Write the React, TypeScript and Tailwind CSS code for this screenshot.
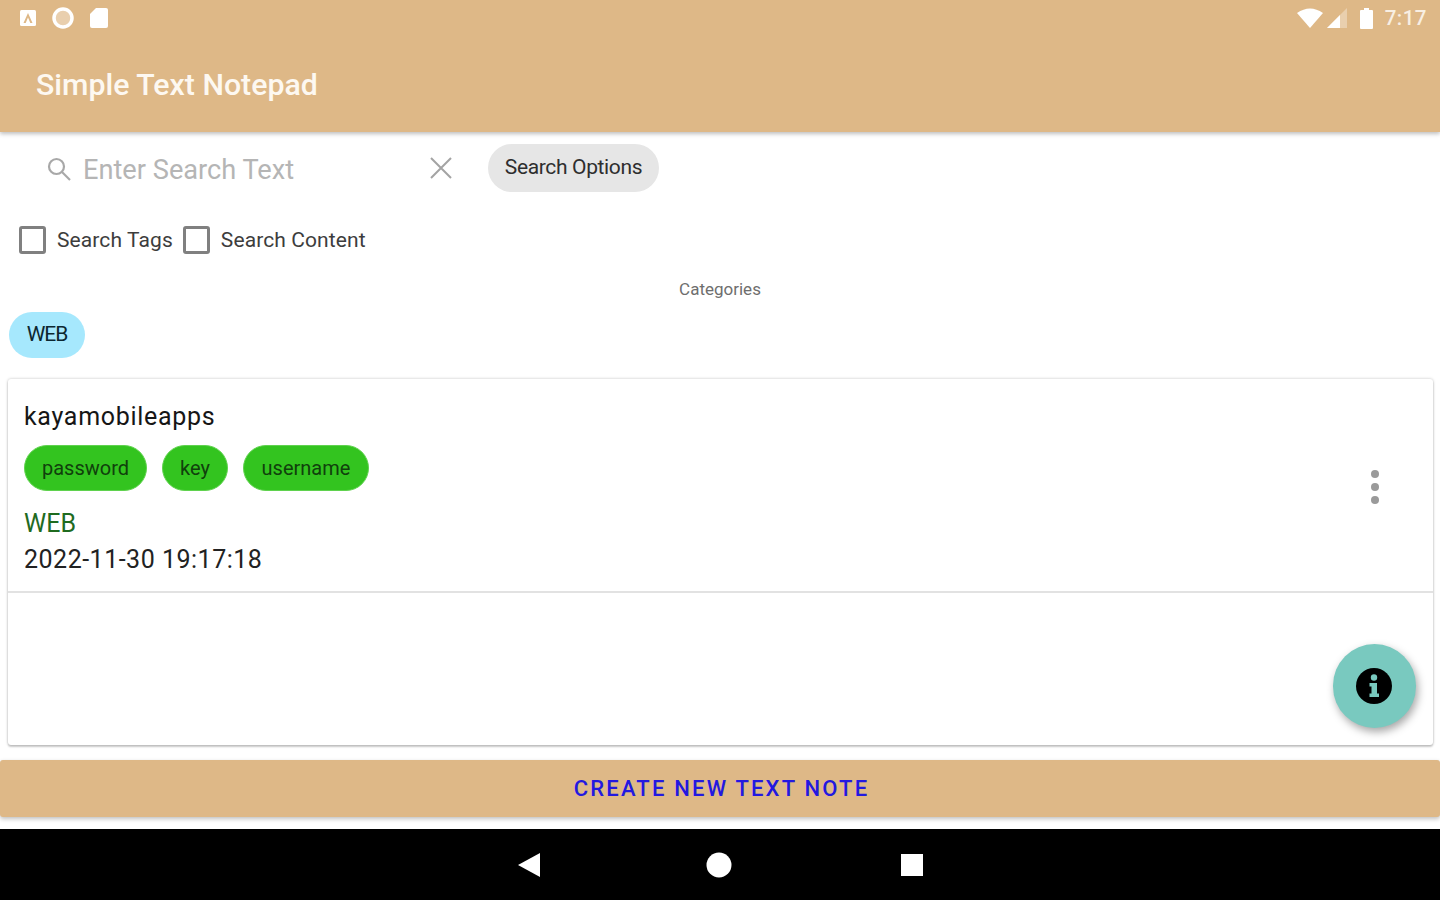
const font = { fontFamily: "Roboto, sans-serif" };

function StatusBar() {
  return (
    <div className="h-[36px] flex items-center justify-between pl-[19px] pr-[13px]">
      <div className="flex items-center gap-[14px]">
        <svg width="18" height="20" viewBox="0 0 18 20">
          <rect x="1" y="2" width="16" height="16" rx="1.5" fill="#fff" />
          <path d="M4.5 15 L9 5 L13.5 15 L11.3 15 L9 9.6 L6.7 15 Z" fill="#DEB887" />
        </svg>
        <svg width="24" height="24" viewBox="0 0 24 24">
          <circle cx="12" cy="12" r="9" fill="#e9cfae" stroke="#fff" strokeWidth="3.5" />
        </svg>
        <svg width="20" height="22" viewBox="0 0 20 22">
          <path d="M7 1 H17 Q19 1 19 3 V19 Q19 21 17 21 H3 Q1 21 1 19 V7 Z" fill="#fff" />
        </svg>
      </div>
      <div className="flex items-center">
        <svg width="28" height="22" viewBox="0 0 28 22" className="mr-[3px]">
          <path d="M1 6 Q14 -3 27 6 L14 21 Z" fill="#fff" />
        </svg>
        <svg width="20" height="20" viewBox="0 0 20 20" className="mr-[12px]">
          <path d="M20 0 V20 H0 Z" fill="#e9cfae" />
          <path d="M13 7 V20 H0 Z" fill="#fff" />
        </svg>
        <svg width="16" height="24" viewBox="0 0 16 24" className="mr-[10px]">
          <path d="M5 2 H10 V4 H13 Q14 4 14 5 V22 Q14 23 13 23 H2 Q1 23 1 22 V5 Q1 4 2 4 H5 Z" fill="#fff" />
        </svg>
        <span className="text-[20.5px] leading-none font-medium text-[#f8efe3] tracking-[0.5px]">7:17</span>
      </div>
    </div>
  );
}

function Chip({ label, w }: { label: string; w: string }) {
  return (
    <div className={`${w} h-[46px] rounded-full bg-[#33c41f] border border-[#5fd24e] flex items-center justify-center text-[20px] text-[#10400c]`}>
      {label}
    </div>
  );
}

function Check({ label }: { label: string }) {
  return (
    <div className="flex items-center gap-[11px]">
      <div className="w-[27px] h-[28px] rounded-[3px] border-[3px] border-[#808080] bg-white" />
      <span className="text-[21px] leading-none tracking-[0.1px] text-[#3d3d3d]">{label}</span>
    </div>
  );
}

export default function App() {
  return (
    <div style={font} className="w-[1440px] h-[900px] overflow-hidden flex flex-col bg-white">
      <header className="h-[132px] shrink-0 bg-[#DEB887] shadow-[0_2px_4px_rgba(0,0,0,0.25)] z-10">
        <StatusBar />
        <div className="pl-[36px] pt-[31px] text-[30.3px] leading-[36px] font-medium text-[#fdf8f1]">Simple Text Notepad</div>
      </header>

      <div className="h-[60px] shrink-0 flex items-end">
        <div className="w-[488px] h-[47px] shrink-0 pl-[45px] flex items-center">
          <svg width="28" height="28" viewBox="0 0 28 28" fill="none" stroke="#a8a8a8" strokeWidth="2.2">
            <circle cx="11.5" cy="11.5" r="7.5" />
            <path d="M17 17 L25 25" />
          </svg>
          <span className="ml-[10px] pt-[5px] text-[27.2px] leading-none text-[#b5b5b5]">Enter Search Text</span>
          <svg width="24" height="24" viewBox="0 0 24 24" fill="none" stroke="#a3a3a3" strokeWidth="2" className="ml-[auto] mr-[35px] mb-[1px]">
            <path d="M2 2 L22 22 M22 2 L2 22" />
          </svg>
        </div>
        <div className="w-[171px] h-[48px] rounded-full bg-[#e6e6e6] flex items-center justify-center text-[21px] tracking-[-0.35px] text-[#2e2e2e]">
          Search Options
        </div>
      </div>

      <div className="h-[48px] mt-[24px] shrink-0 flex items-center pl-[19px] gap-[10px]">
        <Check label="Search Tags" />
        <Check label="Search Content" />
      </div>

      <div className="h-[20px] mt-[15px] mb-[-1px] shrink-0 flex items-center justify-center text-[17px] leading-none text-[#6e6e6e]">Categories</div>

      <div className="mt-[14px] pl-[9px] shrink-0">
        <div className="w-[76px] h-[46px] rounded-full bg-[#a6e8fd] flex items-center justify-center text-[21px] tracking-[-1px] text-[#0c2730]">WEB</div>
      </div>

      <div className="ml-[8px] mr-[7px] mt-[21px] h-[366px] shrink-0 rounded-[3px] bg-white shadow-[0_0_3px_rgba(0,0,0,0.25),0_2px_2px_rgba(0,0,0,0.18)] relative">
        <div className="h-[214px] pt-[8px] pl-[16px] pr-[54px] border-b-2 border-[#e2e2e2] flex items-center justify-between">
          <div className="flex flex-col">
            <div className="text-[25px] leading-[30px] text-[#161616] tracking-[0.7px] mt-[-1px]">kayamobileapps</div>
            <div className="flex gap-[15px] mt-[13px]">
              <Chip label="password" w="w-[123px]" />
              <Chip label="key" w="w-[66px]" />
              <Chip label="username" w="w-[126px]" />
            </div>
            <div className="text-[25px] leading-[30px] text-[#1f6b1f] mt-[18px]">WEB</div>
            <div className="text-[25px] leading-[30px] text-[#222222] tracking-[0.5px] mt-[6px]">2022-11-30 19:17:18</div>
          </div>
          <div className="flex flex-col gap-[5px] mt-[-4px]">
            <div className="w-[8px] h-[8px] rounded-full bg-[#9a9a9a]" />
            <div className="w-[8px] h-[8px] rounded-full bg-[#9a9a9a]" />
            <div className="w-[8px] h-[8px] rounded-full bg-[#9a9a9a]" />
          </div>
        </div>
        <div className="absolute left-[1325px] top-[265px] w-[83px] h-[84px] rounded-full bg-[#79c9bf] shadow-[2px_4px_8px_rgba(0,0,0,0.35)] flex items-center justify-center">
          <svg width="36" height="36" viewBox="0 0 36 36" className="-translate-x-[1px]">
            <circle cx="18" cy="18" r="18" fill="#000" />
            <circle cx="18" cy="9.5" r="3.2" fill="#79c9bf" />
            <path d="M13.5 15 H21 V25.5 H23 V29 H13.5 V25.5 H15.5 V18.5 H13.5 Z" fill="#79c9bf" />
          </svg>
        </div>
      </div>

      <div className="mt-[15px] h-[57px] shrink-0 rounded-[3px] bg-[#DEB887] shadow-[0_2px_4px_rgba(0,0,0,0.25)] flex items-center justify-center pl-[3px] text-[22px] font-medium tracking-[2.2px] text-[#2318e0]">
        CREATE NEW TEXT NOTE
      </div>

      <nav className="mt-[12px] flex-1 bg-black flex items-center justify-center">
        <div className="flex items-center">
          <svg width="24" height="26" viewBox="0 0 24 26"><path d="M23 1 V25 L1 13 Z" fill="#fff" /></svg>
          <svg width="26" height="26" viewBox="0 0 26 26" className="ml-[165px]"><circle cx="13" cy="13" r="12.5" fill="#fff" /></svg>
          <svg width="24" height="24" viewBox="0 0 24 24" className="ml-[168px]"><rect x="1" y="1" width="22" height="22" fill="#fff" /></svg>
        </div>
      </nav>
    </div>
  );
}
